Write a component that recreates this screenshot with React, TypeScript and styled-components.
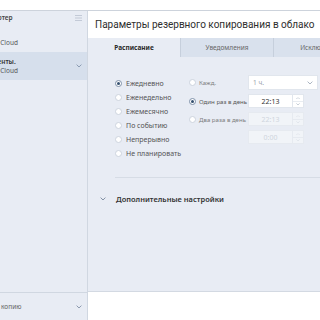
import React from "react";
import styled, { createGlobalStyle } from "styled-components";

const Global = createGlobalStyle`
  html, body { margin: 0; padding: 0; background: #fff; }
  body { font-family: "Noto Sans", "Open Sans", sans-serif; color: #333; }
`;

const Window = styled.div`
  width: 320px;
  height: 320px;
  display: flex;
  flex-direction: column;
  overflow: hidden;
`;

const TopStrip = styled.div`
  height: 10px;
  flex: none;
  background: #fff;
  border-bottom: 1px solid #cdd3dc;
`;

const Body = styled.div`
  flex: 1;
  display: flex;
  min-height: 0;
`;

/* sidebar is cut off on the left in the picture */
const Sidebar = styled.div`
  width: 87px;
  flex: none;
  display: flex;
  flex-direction: column;
  background: #e8ecf4;
  border-right: 1px solid #d0d7e1;
  overflow: hidden;
`;

const SideList = styled.div`
  flex: 1;
  width: 200px;
  margin-left: -113px;
`;

const SideHead = styled.div`
  height: 13px;
  display: flex;
  align-items: center;
  justify-content: space-between;
  padding: 0 5px 0 88px;
  font-size: 6.5px;
  font-weight: 600;
  color: #444;
`;

const SideItem = styled.div<{ $active?: boolean }>`
  height: 28px;
  display: flex;
  align-items: center;
  justify-content: space-between;
  padding: 0 5px 0 89px;
  background: ${(p) => (p.$active ? "#d6dfec" : "transparent")};
`;

const ItemText = styled.div<{ $single?: boolean }>`
  display: flex;
  flex-direction: column;
  line-height: 9px;
  font-size: 6.5px;
  padding-top: ${(p) => (p.$single ? "9px" : "0")};
`;

const ItemName = styled.span`
  font-weight: 600;
  color: #333;
`;

const ItemDest = styled.span`
  color: #555;
`;

const SideFooter = styled.div`
  height: 28px;
  flex: none;
  width: 200px;
  margin-left: -113px;
  display: flex;
  align-items: center;
  justify-content: space-between;
  padding: 0 5px 0 82px;
  box-sizing: border-box;
  border-top: 1px solid #d0d7e1;
  font-size: 6.5px;
  color: #666;
`;

const Main = styled.div`
  flex: 1;
  display: flex;
  flex-direction: column;
  min-width: 0;
`;

const Header = styled.div`
  height: 27px;
  flex: none;
  display: flex;
  align-items: center;
  padding-left: 7px;
  background: #fff;
`;

const Title = styled.h1`
  margin: 0;
  font-family: Roboto, "Noto Sans", sans-serif;
  font-size: 10px;
  font-weight: 400;
  color: #2e2e2e;
  white-space: nowrap;
`;

const Tabs = styled.div`
  height: 19px;
  flex: none;
  display: flex;
  background: #d9e1ed;
`;

const Tab = styled.div<{ $active?: boolean }>`
  width: 93px;
  flex: none;
  display: flex;
  align-items: center;
  justify-content: center;
  font-size: 6.5px;
  white-space: nowrap;
  box-sizing: border-box;
  background: ${(p) => (p.$active ? "#e8ecf4" : "#d9e1ed")};
  font-weight: ${(p) => (p.$active ? 700 : 400)};
  color: ${(p) => (p.$active ? "#2b2b2b" : "#666")};
  border-left: ${(p) => (p.$active ? "none" : "1px solid #c6cfdc")};
  &:first-child { width: 92px; }
`;

const Content = styled.div`
  flex: 1;
  background: #e8ecf4;
  border-bottom: 1px solid #d3d9e2;
  padding: 18px 0 0 27px;
`;

const Schedule = styled.div`
  display: flex;
  align-items: flex-start;
`;

const Modes = styled.div`
  width: 74px;
  flex: none;
  padding-top: 1px;
`;

const RadioRow = styled.label<{ $muted?: boolean; $small?: boolean }>`
  height: 14px;
  display: flex;
  align-items: center;
  gap: ${(p) => (p.$small ? "3px" : "4px")};
  font-size: ${(p) => (p.$small ? "6.1px" : "7px")};
  color: ${(p) => (p.$muted ? "#7d7d7d" : "#555")};
  white-space: nowrap;
`;

const Radio = styled.span<{ $on?: boolean }>`
  width: 7px;
  height: 7px;
  flex: none;
  box-sizing: border-box;
  border-radius: 50%;
  background: #fff;
  border: 1px solid ${(p) => (p.$on ? "#7e90a8" : "#cdd4de")};
  display: flex;
  align-items: center;
  justify-content: center;
  &::after {
    content: "";
    width: 3px;
    height: 3px;
    border-radius: 50%;
    background: ${(p) => (p.$on ? "#34506f" : "transparent")};
  }
`;

const Times = styled.div`
  display: grid;
  grid-template-columns: 59px auto;
  row-gap: 4px;
  align-items: center;
`;

const Select = styled.div`
  width: 70px;
  height: 15px;
  box-sizing: border-box;
  display: flex;
  align-items: center;
  justify-content: space-between;
  padding: 0 4px 0 4px;
  background: #fff;
  border: 1px solid #e1e6ed;
  font-size: 6.5px;
  color: #9aa2ad;
`;

const TimeBox = styled.div`
  display: flex;
  height: 14px;
`;

const TimeField = styled.div<{ $off?: boolean }>`
  width: 45px;
  box-sizing: border-box;
  display: flex;
  align-items: center;
  justify-content: center;
  font-size: 7px;
  background: ${(p) => (p.$off ? "#f1f4f8" : "#fff")};
  border: 1px solid ${(p) => (p.$off ? "#e6eaf0" : "#e1e6ed")};
  color: ${(p) => (p.$off ? "#cfd5dd" : "#333")};
`;

const Spin = styled.div<{ $off?: boolean }>`
  width: 11px;
  display: flex;
  flex-direction: column;
  box-sizing: border-box;
  border: 1px solid ${(p) => (p.$off ? "#e6eaf0" : "#e1e6ed")};
  border-left: none;
  background: ${(p) => (p.$off ? "#f1f4f8" : "#fff")};
  color: ${(p) => (p.$off ? "#d5dae2" : "#9aa6b6")};
  & > span {
    flex: 1;
    display: flex;
    align-items: center;
    justify-content: center;
  }
  & > span + span { border-top: 1px solid ${(p) => (p.$off ? "#e6eaf0" : "#e8ecf1")}; }
`;

const Divider = styled.div`
  margin-top: 17px;
  height: 1px;
  background: #d6dce5;
`;

const More = styled.div`
  margin: 14px 0 0 -15px;
  height: 14px;
  display: flex;
  align-items: center;
  gap: 10px;
  font-size: 7.5px;
  font-weight: 600;
  color: #333;
`;

const Blank = styled.div`
  height: 28px;
  flex: none;
  background: #fff;
`;

const Chevron = ({ size = 6, color = "#7d8ea6", up = false }: { size?: number; color?: string; up?: boolean }) => (
  <svg width={size} height={size * 0.6} viewBox="0 0 10 6" style={{ transform: up ? "rotate(180deg)" : undefined }}>
    <polyline points="1,1 5,5 9,1" fill="none" stroke={color} strokeWidth="1.4" />
  </svg>
);

const Burger = () => (
  <svg width="7" height="6" viewBox="0 0 7 6">
    <path d="M0 0.5H7M0 3H7M0 5.5H7" stroke="#b9c2cf" strokeWidth="0.8" />
  </svg>
);

const Stepper = ({ off }: { off?: boolean }) => (
  <Spin $off={off}>
    <span><Chevron size={4} color="currentColor" up /></span>
    <span><Chevron size={4} color="currentColor" /></span>
  </Spin>
);

const modes = ["Ежедневно", "Еженедельно", "Ежемесячно", "По событию", "Непрерывно", "Не планировать"];

export default function App() {
  return (
    <Window>
      <Global />
      <TopStrip />
      <Body>
        <Sidebar>
          <SideList>
            <SideHead>
              <span>Компьютер</span>
              <Burger />
            </SideHead>
            <SideItem>
              <ItemText $single>
                <ItemDest>Acronis Cloud</ItemDest>
              </ItemText>
            </SideItem>
            <SideItem $active>
              <ItemText>
                <ItemName>Документы.</ItemName>
                <ItemDest>Acronis Cloud</ItemDest>
              </ItemText>
              <Chevron />
            </SideItem>
          </SideList>
          <SideFooter>
            <span>Добавить копию</span>
            <Chevron color="#7a8aa0" />
          </SideFooter>
        </Sidebar>
        <Main>
          <Header>
            <Title>Параметры резервного копирования в облако</Title>
          </Header>
          <Tabs>
            <Tab $active>Расписание</Tab>
            <Tab>Уведомления</Tab>
            <Tab>Исключения</Tab>
          </Tabs>
          <Content>
            <Schedule>
              <Modes>
                {modes.map((m, i) => (
                  <RadioRow key={m}>
                    <Radio $on={i === 0} />
                    {m}
                  </RadioRow>
                ))}
              </Modes>
              <Times>
                <RadioRow $muted $small>
                  <Radio />
                  Кажд.
                </RadioRow>
                <Select>
                  <span>1 ч.</span>
                  <Chevron color="#9aa6b6" />
                </Select>
                <RadioRow $small>
                  <Radio $on />
                  Один раз в день
                </RadioRow>
                <TimeBox>
                  <TimeField>22:13</TimeField>
                  <Stepper />
                </TimeBox>
                <RadioRow $muted $small>
                  <Radio />
                  Два раза в день
                </RadioRow>
                <TimeBox>
                  <TimeField $off>22:13</TimeField>
                  <Stepper off />
                </TimeBox>
                <span />
                <TimeBox>
                  <TimeField $off>0:00</TimeField>
                  <Stepper off />
                </TimeBox>
              </Times>
            </Schedule>
            <Divider />
            <More>
              <Chevron color="#6f7f96" />
              <span>Дополнительные настройки</span>
            </More>
          </Content>
          <Blank />
        </Main>
      </Body>
    </Window>
  );
}
